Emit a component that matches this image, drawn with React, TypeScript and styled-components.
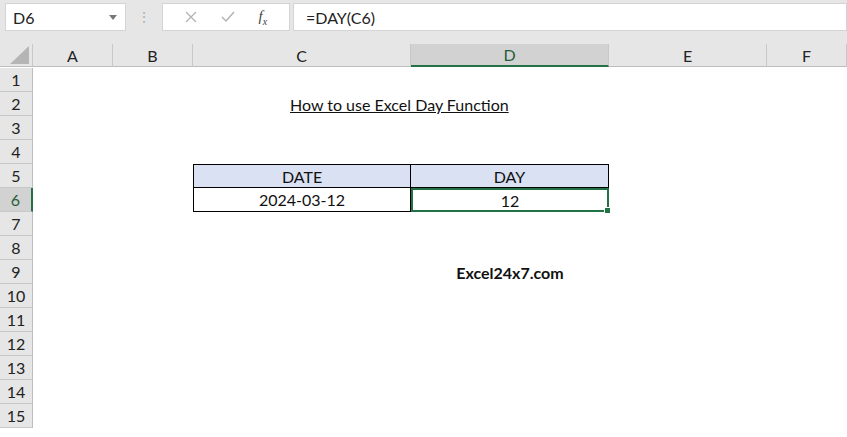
import React from "react";
import styled, { createGlobalStyle, css } from "styled-components";

const Global = createGlobalStyle`
  body { margin: 0; background: #fff; font-family: Lato, "Open Sans", sans-serif; overflow: hidden; }
`;

const COLS = [
  { k: "A", w: 80 },
  { k: "B", w: 80 },
  { k: "C", w: 218 },
  { k: "D", w: 198 },
  { k: "E", w: 158 },
  { k: "F", w: 80 },
];
const template = `33px ${COLS.map((c) => c.w + "px").join(" ")}`;

const Page = styled.div`
  width: 847px;
  height: 437px;
  background: #fff;
  overflow: hidden;
`;

const Toolbar = styled.div`
  height: 44px;
  background: #e6e6e6;
  display: flex;
  align-items: flex-start;
  padding-top: 3px;
  box-sizing: border-box;
`;

const Box = styled.div<{ $w?: number }>`
  height: 28px;
  background: #fff;
  border: 1px solid #d4d4d4;
  box-sizing: border-box;
  display: flex;
  align-items: center;
  font-size: 16px;
  color: #222;
  ${({ $w }) => ($w ? css`width: ${$w}px;` : css`flex: 1;`)}
`;

const NameBox = styled(Box)`
  margin-left: 5px;
  padding: 0 8px 0 7px;
  justify-content: space-between;
`;

const Dots = styled.div`
  width: 36px;
  display: flex;
  justify-content: center;
  color: #b0b0b0;
  font-size: 14px;
  line-height: 28px;
`;

const IconBox = styled(Box)`
  justify-content: space-around;
  padding: 0 10px;
  margin-right: 3px;
`;

const Fx = styled.span`
  font-family: "Liberation Serif", serif;
  font-style: italic;
  font-size: 15px;
  color: #444;
  sub { font-size: 10px; }
`;

const Formula = styled(Box)`
  padding-left: 12px;
`;

const Sheet = styled.div`
  display: grid;
  grid-template-columns: ${template};
  grid-auto-rows: 24px;
`;

const ColHead = styled.div<{ $sel?: boolean }>`
  height: 23px;
  background: ${({ $sel }) => ($sel ? "#d2d2d2" : "#e6e6e6")};
  border-right: 1px solid #c8c8c8;
  border-bottom: ${({ $sel }) => ($sel ? "2px solid #217346" : "1px solid #bdbdbd")};
  box-sizing: border-box;
  display: flex;
  align-items: center;
  justify-content: center;
  font-size: 16px;
  color: ${({ $sel }) => ($sel ? "#1f5e38" : "#222")};
  align-self: start;
`;

const Corner = styled(ColHead)`
  align-items: flex-end;
  justify-content: flex-end;
  padding: 0 3px 2px 0;
  svg { display: block; }
`;

const RowHead = styled.div<{ $sel?: boolean; $row: number }>`
  grid-row: ${({ $row }) => $row + 1};
  grid-column: 1;
  background: ${({ $sel }) => ($sel ? "#d2d2d2" : "#e6e6e6")};
  border-bottom: 1px solid #c8c8c8;
  border-right: ${({ $sel }) => ($sel ? "2px solid #217346" : "1px solid #bdbdbd")};
  box-sizing: border-box;
  display: flex;
  align-items: center;
  justify-content: center;
  font-size: 16px;
  color: ${({ $sel }) => ($sel ? "#1f5e38" : "#222")};
`;

const Cell = styled.div<{ $col: number; $row: number; $head?: boolean; $sel?: boolean; $first?: boolean }>`
  grid-column: ${({ $col }) => $col + 1};
  grid-row: ${({ $row }) => $row + 1};
  box-sizing: border-box;
  display: flex;
  align-items: center;
  justify-content: center;
  font-size: 16px;
  color: #111;
  border-right: 1px solid #000;
  border-bottom: 1px solid #000;
  ${({ $first }) => $first && css`border-left: 1px solid #000;`}
  ${({ $head }) => $head && css`background: #d9e1f2; border-top: 1px solid #000;`}
  ${({ $sel }) =>
    $sel &&
    css`
      position: relative;
      border: 2px solid #217346;
      &::after {
        content: "";
        position: absolute;
        right: -4px;
        bottom: -4px;
        width: 5px;
        height: 5px;
        background: #217346;
        border: 1px solid #fff;
      }
    `}
`;

const Title = styled.div`
  grid-column: 4 / 6;
  grid-row: 3;
  padding-left: 97px;
  display: flex;
  align-items: center;
  font-size: 16px;
  text-decoration: underline;
  color: #111;
`;

const Brand = styled.div`
  grid-column: 5;
  grid-row: 10;
  display: flex;
  align-items: center;
  justify-content: center;
  font-size: 16px;
  font-weight: 700;
  color: #111;
`;

export default function App() {
  const rows = Array.from({ length: 15 }, (_, i) => i + 1);
  return (
    <Page>
      <Global />
      <Toolbar>
        <NameBox $w={121}>
          <span>D6</span>
          <svg width="8" height="5" viewBox="0 0 8 5"><path d="M0 0h8L4 5z" fill="#777" /></svg>
        </NameBox>
        <Dots>⋮</Dots>
        <IconBox $w={128}>
          <svg width="12" height="12" viewBox="0 0 12 12"><path d="M1 1l10 10M11 1L1 11" stroke="#b3b3b3" strokeWidth="1.3" /></svg>
          <svg width="14" height="12" viewBox="0 0 14 12"><path d="M1 6l4 4 8-9" stroke="#b3b3b3" strokeWidth="1.5" fill="none" /></svg>
          <Fx>f<sub>x</sub></Fx>
        </IconBox>
        <Formula>=DAY(C6)</Formula>
      </Toolbar>
      <Sheet>
        <Corner>
          <svg width="20" height="18" viewBox="0 0 20 18"><path d="M20 0V18H1z" fill="#b5b5b5" /></svg>
        </Corner>
        {COLS.map((c) => (
          <ColHead key={c.k} $sel={c.k === "D"}>{c.k}</ColHead>
        ))}
        {rows.map((r) => (
          <RowHead key={r} $row={r} $sel={r === 6}>{r}</RowHead>
        ))}
        <Title>How to use Excel Day Function</Title>
        <Cell $row={5} $col={3} $head $first>DATE</Cell>
        <Cell $row={5} $col={4} $head>DAY</Cell>
        <Cell $row={6} $col={3} $first>2024-03-12</Cell>
        <Cell $row={6} $col={4} $sel>12</Cell>
        <Brand>Excel24x7.com</Brand>
      </Sheet>
    </Page>
  );
}
